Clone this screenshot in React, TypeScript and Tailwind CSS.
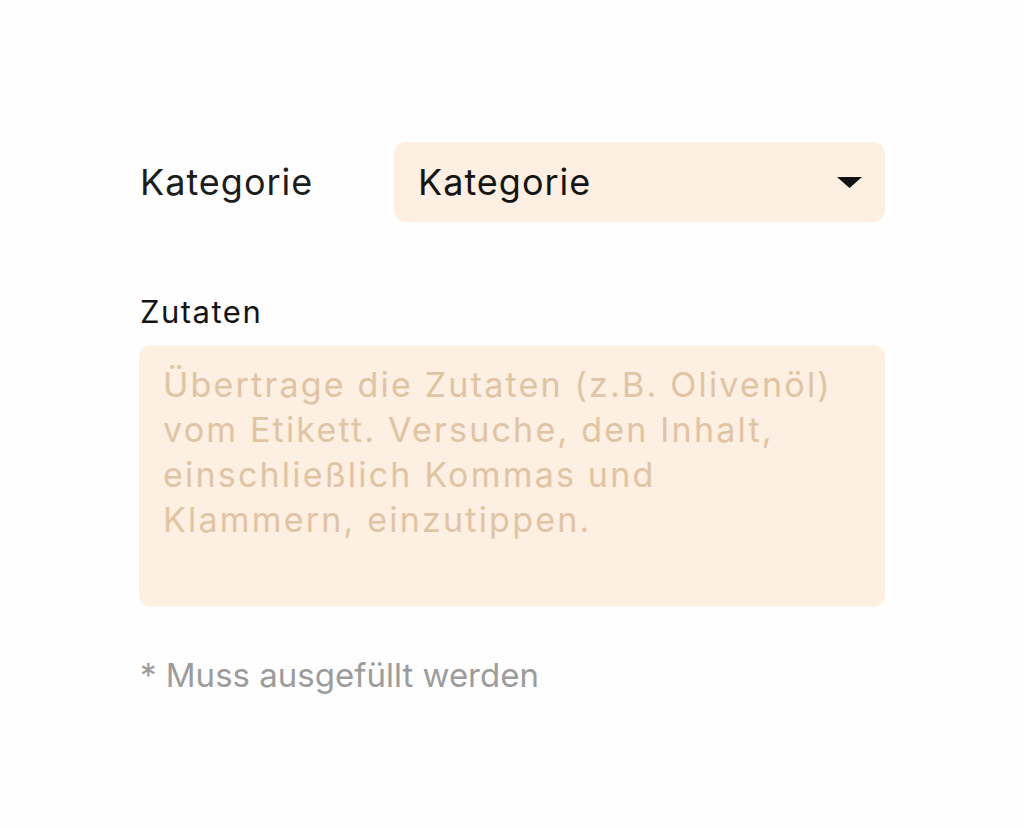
const placeholderLines = [
  'Übertrage die Zutaten (z.B. Olivenöl)',
  'vom Etikett. Versuche, den Inhalt,',
  'einschließlich Kommas und',
  'Klammern, einzutippen.',
];

export default function App() {
  return (
    <div
      className="min-h-[828px] w-[1024px] bg-[#fefefe] pt-[142px]"
      style={{ fontFamily: 'Inter, "Open Sans", sans-serif' }}
    >
      <div className="mx-[139px] flex flex-col">
        <div className="flex items-center">
          <span className="w-[255px] pl-px text-[36px] tracking-[1px] text-[#1c1c1c]">Kategorie</span>
          <div className="flex h-[80px] flex-1 items-center justify-between rounded-[12px] bg-[#fdefe2] pl-[24px] pr-[23px]">
            <span className="text-[36px] tracking-[1px] text-[#141414]">Kategorie</span>
            <svg width="25" height="11" viewBox="0 0 25 11" aria-hidden="true">
              <path d="M0 0h25L12.5 11z" fill="#111" />
            </svg>
          </div>
        </div>

        <label className="mt-[70px] pl-px text-[31px] leading-[40px] tracking-[1.5px] text-[#141414]">
          Zutaten
        </label>
        <div className="mt-[13px] h-[262px] rounded-[12px] bg-[#fdefe2] pl-[24px] pr-[24px] pt-[17px]">
          <p className="text-[34px] leading-[45px] tracking-[2.2px] text-[#e0c4a4]">
            {placeholderLines.map((line) => (
              <span key={line} className="block whitespace-nowrap">
                {line}
              </span>
            ))}
          </p>
        </div>

        <p className="mt-[48px] pl-px text-[33px] leading-[40px] text-[#9c9c9c]">
          * Muss ausgefüllt werden
        </p>
      </div>
    </div>
  );
}
